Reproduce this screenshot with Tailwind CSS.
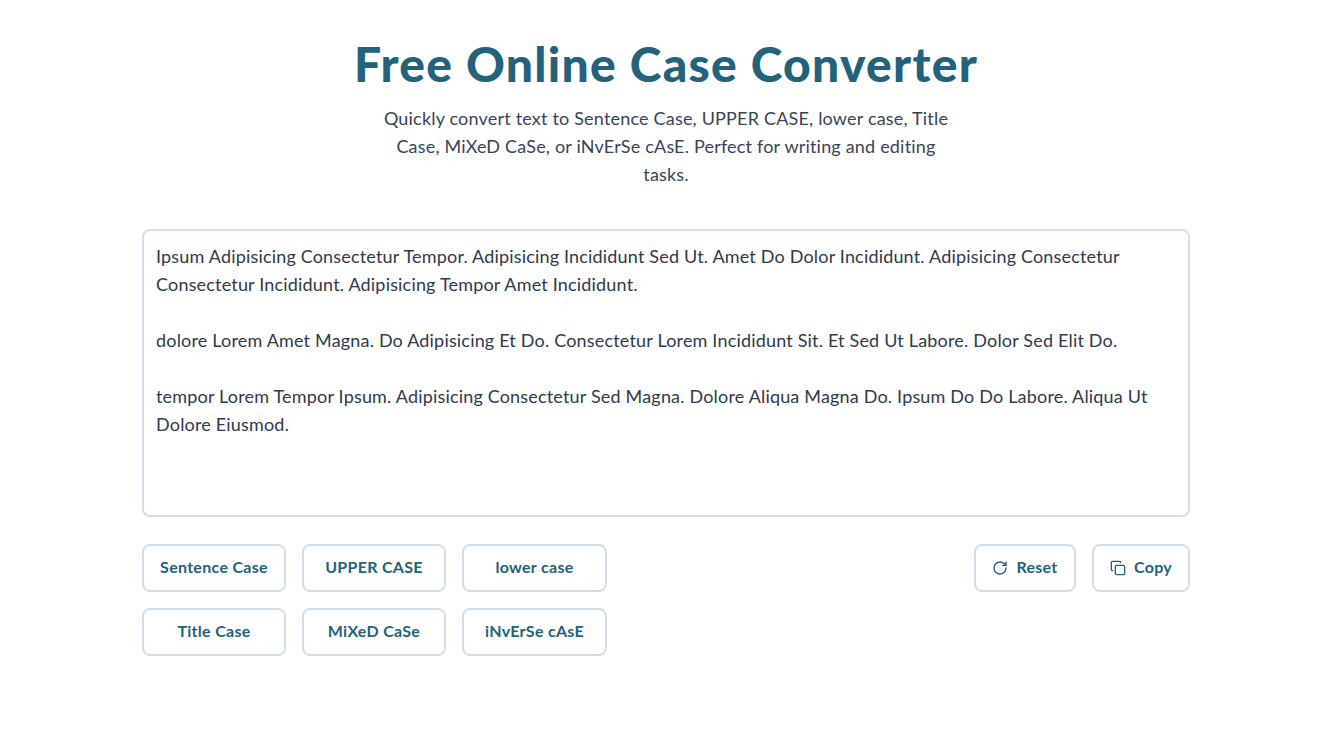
<!DOCTYPE html>
<html><head><meta charset="utf-8"><script src="https://cdn.jsdelivr.net/npm/@tailwindcss/browser@4"></script></head>
<body class="bg-white font-['Lato',sans-serif]">
<div class="w-[1332px]">
<main class="w-[1048px] mx-auto pt-[31px]">
<div class="flex flex-col items-center text-center">
<h1 class="text-[48px] leading-[66px] font-black tracking-[1.28px] text-[#23627b]">Free Online Case Converter</h1>
<p class="mt-[7px] w-[576px] text-[18px] leading-[28px] tracking-[0.19px] text-[#3a4357]">Quickly convert text to Sentence Case, UPPER CASE, lower case, Title Case, MiXeD CaSe, or iNvErSe cAsE. Perfect for writing and editing tasks.</p>
</div>
<textarea class="mt-[41px] block w-full h-[288px] resize-none rounded-lg border-2 border-[#d3dfe8] px-[12px] py-[11px] text-[18px] leading-[28px] tracking-[0.18px] text-[#2f3a4c] outline-none">Ipsum Adipisicing Consectetur Tempor. Adipisicing Incididunt Sed Ut. Amet Do Dolor Incididunt. Adipisicing Consectetur Consectetur Incididunt. Adipisicing Tempor Amet Incididunt.

dolore Lorem Amet Magna. Do Adipisicing Et Do. Consectetur Lorem Incididunt Sit. Et Sed Ut Labore. Dolor Sed Elit Do.

tempor Lorem Tempor Ipsum. Adipisicing Consectetur Sed Magna. Dolore Aliqua Magna Do. Ipsum Do Do Labore. Aliqua Ut Dolore Eiusmod.</textarea>
<div class="mt-[27px] flex justify-between items-start">
<div class="grid grid-cols-[144px_144px_145px] gap-4 text-[16px] font-bold tracking-[0.3px] text-[#23627b]">
<button class="h-12 pb-[2px] rounded-lg border-2 border-[#d3dfe8]">Sentence Case</button>
<button class="h-12 pb-[2px] rounded-lg border-2 border-[#d3dfe8]">UPPER CASE</button>
<button class="h-12 pb-[2px] rounded-lg border-2 border-[#d3dfe8]">lower case</button>
<button class="h-12 pb-[2px] rounded-lg border-2 border-[#d3dfe8]">Title Case</button>
<button class="h-12 pb-[2px] rounded-lg border-2 border-[#d3dfe8]">MiXeD CaSe</button>
<button class="h-12 pb-[2px] rounded-lg border-2 border-[#d3dfe8]">iNvErSe cAsE</button>
</div>
<div class="flex gap-4 text-[16px] font-bold tracking-[0.3px] text-[#23627b]">
<button class="h-12 w-[102px] rounded-lg border-2 border-[#d3dfe8] flex items-center justify-center gap-2">
<svg class="w-4 h-4" viewBox="0 0 24 24" fill="none" stroke="currentColor" stroke-width="2" stroke-linecap="round" stroke-linejoin="round"><path d="M21 12a9 9 0 1 1-9-9c2.52 0 4.93 1 6.74 2.74L21 8"/><path d="M21 3v5h-5"/></svg><span class="pb-[2px]">Reset</span></button>
<button class="h-12 w-[98px] rounded-lg border-2 border-[#d3dfe8] flex items-center justify-center gap-2">
<svg class="w-4 h-4" viewBox="0 0 24 24" fill="none" stroke="currentColor" stroke-width="2" stroke-linecap="round" stroke-linejoin="round"><rect x="8" y="8" width="14" height="14" rx="2" ry="2"/><path d="M4 16c-1.1 0-2-.9-2-2V4c0-1.1.9-2 2-2h10c1.1 0 2 .9 2 2"/></svg><span class="pb-[2px]">Copy</span></button>
</div>
</div>
</main>
</div>
</body></html>
